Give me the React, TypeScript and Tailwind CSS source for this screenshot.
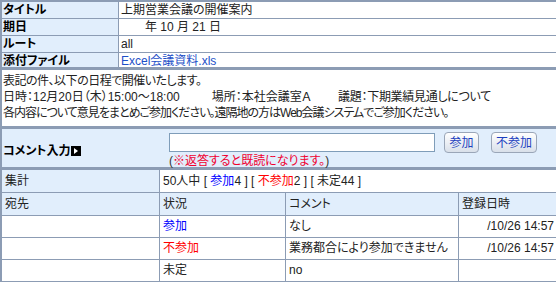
import React from "react";

const FONT = { fontFamily: '"Liberation Sans", "Noto Sans CJK JP", sans-serif' };

interface InfoRow {
  label: string;
  value: React.ReactNode;
  h: string;
}

const infoRows: InfoRow[] = [
  { label: "タイトル", value: "上期営業会議の開催案内", h: "h-[17px]" },
  { label: "期日", value: <span className="pl-[24px]">年 10 月 21 日</span>, h: "h-[17px]" },
  { label: "ルート", value: "all", h: "h-[17px]" },
  {
    label: "添付ファイル",
    value: <span className="text-[#1d4fc8]">Excel会議資料.xls</span>,
    h: "h-[14px]",
  },
];

const replies = [
  { status: "参加", color: "text-[#0000ff]", comment: "なし", date: "/10/26 14:57" },
  { status: "不参加", color: "text-[#ff0000]", comment: "業務都合により参加できません", date: "/10/26 14:57" },
  { status: "未定", color: "text-[#222]", comment: "no", date: "" },
];

function Btn({ label, w }: { label: string; w: string }) {
  return (
    <button
      className={`${w} h-[21px] rounded-[4px] border border-[#9aa6b8] bg-gradient-to-b from-white to-[#d9e0ea] text-[12px] leading-none text-[#1c3fbf]`}
    >
      {label}
    </button>
  );
}

export default function App() {
  return (
    <div
      className="w-[556px] h-[288px] overflow-hidden bg-white text-[12px] text-[#222] [font-feature-settings:'palt']"
      style={FONT}
    >
      <div className="border-l-2 border-[#8c9cb4]">
        {/* header info */}
        <div className="border-t-2 border-[#8c9cb4]">
          {infoRows.map((r, i) => (
            <div
              key={r.label}
              className={`flex ${r.h} ${i < infoRows.length - 1 ? "border-b border-[#8c9cb4]" : ""}`}
            >
              <div className="w-[117px] shrink-0 bg-[#e1eefc] border-r border-[#8c9cb4] pl-[1px] font-bold leading-[17px] text-black">
                {r.label}
              </div>
              <div className="pl-[2px] leading-[17px] whitespace-nowrap">{r.value}</div>
            </div>
          ))}
        </div>

        {/* message */}
        <div className="border-t-[3px] border-[#8c9cb4] pt-[3px] pb-[5px] pl-[1px] leading-[16px] whitespace-nowrap text-[#222]">
          <div className="tracking-[-0.5px]">表記の件、以下の日程で開催いたします。</div>
          <div>
            日時：12月20日（木）15:00～18:00
            <span className="ml-[32px]">場所：本社会議室Ａ</span>
            <span className="ml-[27px] tracking-[-0.3px]">議題：下期業績見通しについて</span>
          </div>
          <div className="tracking-[-1px]">
            各内容について意見をまとめご参加ください。遠隔地の方はWeb会議システムでご参加ください。
          </div>
        </div>

        {/* comment input */}
        <div className="border-t-[3px] border-[#8c9cb4] bg-[#e1eefc] h-[41px] flex">
          <div className="w-[167px] shrink-0 flex items-center pl-[1px] pt-[5px] font-bold text-black">
            コメント入力
            <svg width="10" height="10" viewBox="0 0 10 10" className="ml-[1px]">
              <rect x="0" y="0" width="10" height="10" fill="#000" />
              <path d="M3 2 L7 5 L3 8 Z" fill="#fff" />
            </svg>
          </div>
          <div className="flex flex-col pt-[3px]">
            <div className="flex items-center">
              <input className="w-[266px] h-[19px] border border-[#7f9db9] bg-white outline-none" />
              <div className="ml-[9px] flex gap-[12px]">
                <Btn label="参加" w="w-[35px]" />
                <Btn label="不参加" w="w-[46px]" />
              </div>
            </div>
            <div className="mt-[1px] leading-[15px] whitespace-nowrap">
              <span className="text-[#333]">(</span>
              <span className="text-[#f00030]">※返答すると既読になります。</span>
              <span className="text-[#333]">)</span>
            </div>
          </div>
        </div>

        {/* replies */}
        <div className="border-t-[3px] border-[#8c9cb4] text-[#222]">
          <div className="flex h-[23px] border-b border-[#8c9cb4] leading-[22px]">
            <div className="w-[158px] shrink-0 bg-[#e1eefc] border-r border-[#8c9cb4] pl-[3px]">集計</div>
            <div className="pl-[3px] whitespace-nowrap">
              50人中 [ <span className="text-[#0000ff]">参加</span>4 ] [ <span className="text-[#ff0000]">不参加</span>2 ] [ 未定44 ]
            </div>
          </div>
          <div className="flex h-[23px] border-b border-[#8c9cb4] bg-[#e1eefc] leading-[22px]">
            <div className="w-[158px] shrink-0 border-r border-[#8c9cb4] pl-[3px]">宛先</div>
            <div className="w-[126px] shrink-0 border-r border-[#8c9cb4] pl-[3px]">状況</div>
            <div className="w-[173px] shrink-0 border-r border-[#8c9cb4] pl-[3px]">コメント</div>
            <div className="flex-1 pl-[3px]">登録日時</div>
          </div>
          {replies.map((r) => (
            <div key={r.status} className="flex h-[22px] border-b border-[#8c9cb4] leading-[21px]">
              <div className="w-[158px] shrink-0 border-r border-[#8c9cb4]" />
              <div className={`w-[126px] shrink-0 border-r border-[#8c9cb4] pl-[3px] ${r.color}`}>{r.status}</div>
              <div className="w-[173px] shrink-0 border-r border-[#8c9cb4] pl-[3px] whitespace-nowrap">{r.comment}</div>
              <div className="flex-1 pr-[2px] text-right whitespace-nowrap">{r.date}</div>
            </div>
          ))}
        </div>
      </div>
    </div>
  );
}
